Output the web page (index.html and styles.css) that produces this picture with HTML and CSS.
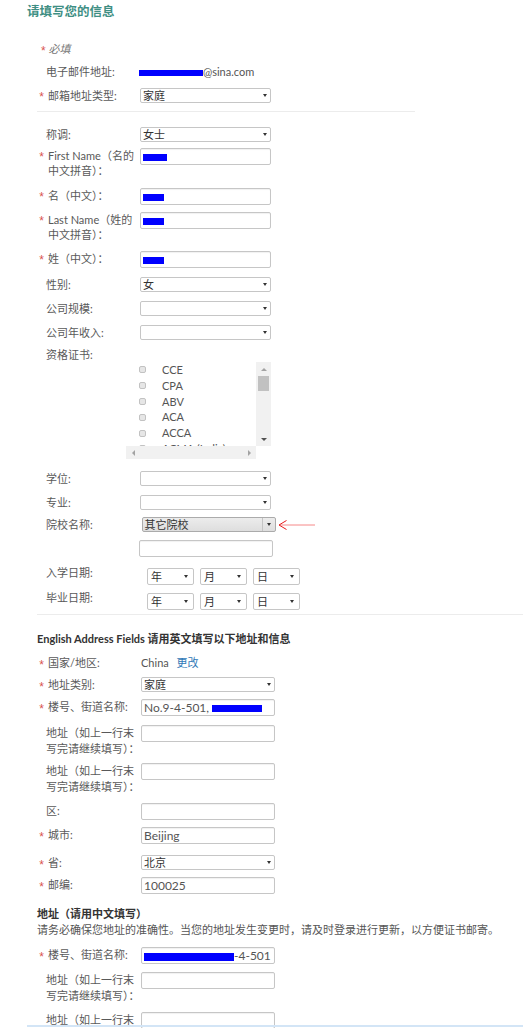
FILE: index.html
```html
<!DOCTYPE html>
<html lang="zh-CN">
<head>
<meta charset="utf-8">
<title>请填写您的信息</title>
<link rel="stylesheet" href="styles.css">
</head>
<body>
<div class="page">
  <h1 class="title">请填写您的信息</h1>
  <div class="note"><span class="star">*</span> <i>必填</i></div>

  <div class="sec s1">
    <div class="row h24"><span class="st"></span><label>电子邮件地址:</label><div class="val"><span class="redact r-email"></span>@sina.com</div></div>
    <div class="row h23"><span class="st">*</span><label class="req">邮箱地址类型:</label><div class="sel"><span>家庭</span><i class="caret"></i></div></div>
    <div class="rule short"></div>
    <div class="row h21"><span class="st"></span><label>称调:</label><div class="sel"><span>女士</span><i class="caret"></i></div></div>
    <div class="row h40"><span class="st">*</span><label class="req">First Name（名的<br>中文拼音）：</label><div class="inp"><span class="redact r24"></span></div></div>
    <div class="row h24"><span class="st">*</span><label class="req">名（中文）：</label><div class="inp"><span class="redact r21"></span></div></div>
    <div class="row h39"><span class="st">*</span><label class="req">Last Name（姓的<br>中文拼音）：</label><div class="inp"><span class="redact r21"></span></div></div>
    <div class="row h26"><span class="st">*</span><label class="req">姓（中文）：</label><div class="inp"><span class="redact r21"></span></div></div>
    <div class="row h24"><span class="st"></span><label>性别:</label><div class="sel"><span>女</span><i class="caret"></i></div></div>
    <div class="row h24"><span class="st"></span><label>公司规模:</label><div class="sel"><span></span><i class="caret"></i></div></div>
    <div class="row h22"><span class="st"></span><label>公司年收入:</label><div class="sel"><span></span><i class="caret"></i></div></div>
    <div class="row h15"><span class="st"></span><label>资格证书:</label></div>

    <div class="listbox">
      <div class="lb-items">
        <div class="lb-item"><span class="cb"></span>CCE</div>
        <div class="lb-item"><span class="cb"></span>CPA</div>
        <div class="lb-item"><span class="cb"></span>ABV</div>
        <div class="lb-item"><span class="cb"></span>ACA</div>
        <div class="lb-item"><span class="cb"></span>ACCA</div>
        <div class="lb-item"><span class="cb"></span>ACMA (India)</div>
      </div>
      <div class="vscroll"><span class="sb-btn"><i class="tri up"></i></span><span class="thumb"></span><span class="sb-fill"></span><span class="sb-btn"><i class="tri down"></i></span></div>
      <div class="hscroll"><span class="sb-btn"><i class="tri left"></i></span><span class="sb-fill"></span><span class="sb-btn"><i class="tri right"></i></span></div>
      <div class="corner"></div>
    </div>

    <div class="row h24"><span class="st"></span><label>学位:</label><div class="sel"><span></span><i class="caret"></i></div></div>
    <div class="row h22"><span class="st"></span><label>专业:</label><div class="sel"><span></span><i class="caret"></i></div></div>
    <div class="row h23"><span class="st"></span><label>院校名称:</label>
      <div class="school">
        <div class="sel gray"><span>其它院校</span><span class="btn"><i class="caret"></i></span></div>
        <svg class="pointer" width="38" height="12" viewBox="0 0 38 12"><line x1="1" y1="6" x2="37" y2="6" stroke="#f46a6a" stroke-width="0.8"/><polyline points="8.5,1.5 1,6 8.5,10.5" fill="none" stroke="#e81c1c" stroke-width="1"/></svg>
      </div>
    </div>
    <div class="row h28"><span class="st"></span><label></label><div class="inp wide"></div></div>
    <div class="row h25 date"><span class="st"></span><label>入学日期:</label><div class="dates"><div class="dsel"><span>年</span><i class="caret sm"></i></div><div class="dsel"><span>月</span><i class="caret sm"></i></div><div class="dsel"><span>日</span><i class="caret sm"></i></div></div></div>
    <div class="row h21 date"><span class="st"></span><label>毕业日期:</label><div class="dates"><div class="dsel"><span>年</span><i class="caret sm"></i></div><div class="dsel"><span>月</span><i class="caret sm"></i></div><div class="dsel"><span>日</span><i class="caret sm"></i></div></div></div>
    <div class="rule"></div>
  </div>

  <div class="sec s2">
    <h2 class="heading h25">English Address Fields 请用英文填写以下地址和信息</h2>
    <div class="row h22"><span class="st">*</span><label class="req">国家/地区:</label><div class="val">China <a class="link">更改</a></div></div>
    <div class="row h22"><span class="st">*</span><label class="req">地址类别:</label><div class="sel"><span>家庭</span><i class="caret"></i></div></div>
    <div class="row h26"><span class="st">*</span><label class="req">楼号、街道名称:</label><div class="inp">No.9-4-501, <span class="redact r50"></span></div></div>
    <div class="row h38"><span class="st"></span><label>地址（如上一行末<br>写完请继续填写）：</label><div class="inp"></div></div>
    <div class="row h40"><span class="st"></span><label>地址（如上一行末<br>写完请继续填写）：</label><div class="inp"></div></div>
    <div class="row h24"><span class="st"></span><label>区:</label><div class="inp"></div></div>
    <div class="row h28"><span class="st">*</span><label class="req">城市:</label><div class="inp">Beijing</div></div>
    <div class="row h22"><span class="st">*</span><label class="req">省:</label><div class="sel"><span>北京</span><i class="caret"></i></div></div>
    <div class="row h28"><span class="st">*</span><label class="req">邮编:</label><div class="inp">100025</div></div>
    <h3 class="subhead">地址（请用中文填写）</h3>
    <p class="desc">请务必确保您地址的准确性。当您的地址发生变更时，请及时登录进行更新，以方便证书邮寄。</p>
    <div class="row h25"><span class="st">*</span><label class="req">楼号、街道名称:</label><div class="inp"><span class="redact r90"></span>-4-501</div></div>
    <div class="row h40"><span class="st"></span><label>地址（如上一行末<br>写完请继续填写）：</label><div class="inp"></div></div>
    <div class="row h40"><span class="st"></span><label>地址（如上一行末<br>写完请继续填写）：</label><div class="inp"></div></div>
  </div>
</div>
<div class="focusline"></div>
</body>
</html>
```

FILE: styles.css
```css
* { box-sizing: border-box; }

body {
  margin: 0;
  background: #fff;
  font-family: Lato, "Noto Sans CJK SC", sans-serif;
  font-size: 11px;
  color: #595959;
}

.page { padding: 4px 0 0 27px; }

.title {
  margin: 0;
  font-size: 12.5px;
  line-height: 16px;
  font-weight: bold;
  color: #3f8f84;
}

.note {
  margin: 21px 0 8px 14px;
  height: 15px;
  line-height: 15px;
  color: #777;
}
.note i { font-style: italic; }
.star {
  color: #d9534f;
  font-family: "Liberation Sans", sans-serif;
  font-size: 12px;
  position: relative;
  top: 2px;
}

.sec { margin-left: 10px; }

.row {
  display: grid;
  grid-template-columns: 9px 94px auto;
  align-items: start;
}
.s2 .row { grid-template-columns: 9px 95px auto; }

.row label { line-height: 15px; white-space: nowrap; }
.s2 .row label { line-height: 16px; }
.row label.req { padding-left: 2px; }
.row.date label { line-height: 9px; }

.st {
  color: #d9534f;
  font-family: "Liberation Sans", sans-serif;
  font-size: 12px;
  line-height: 14px;
  padding-top: 2px;
  text-align: center;
}
.s2 .st { padding-top: 3px; }

.h15 { height: 15px; }
.h21 { height: 21px; }
.h22 { height: 22px; }
.h23 { height: 23px; }
.h24 { height: 24px; }
.h25 { height: 25px; }
.h26 { height: 26px; }
.h28 { height: 28px; }
.h38 { height: 38px; }
.h39 { height: 39px; }
.h40 { height: 40px; }

.val { line-height: 15px; color: #555; white-space: nowrap; }
.s2 .val { line-height: 16px; }
.link { color: #2f78b7; margin-left: 5px; }

.redact {
  display: inline-block;
  background: #0000ff;
  height: 7px;
  vertical-align: middle;
}
.r-email { width: 64px; height: 6px; margin-left: -1px; }
.r21 { width: 21px; }
.r24 { width: 24px; }
.r50 { width: 50px; }
.r90 { width: 90px; height: 8px; }

.inp {
  width: 131px;
  height: 17px;
  border: 1px solid #c6c6c6;
  border-radius: 2px;
  box-shadow: inset 0 1px 1px rgba(0,0,0,.06);
  padding: 0 2px;
  font-size: 12px;
  line-height: 15px;
  color: #555;
  white-space: nowrap;
  overflow: hidden;
}
.s2 .inp { width: 134px; }
.inp.wide { width: 134px; margin-left: -1px; }

.sel {
  display: flex;
  align-items: center;
  justify-content: space-between;
  width: 131px;
  height: 15px;
  border: 1px solid #c6c6c6;
  border-radius: 2px;
  padding-left: 2px;
  line-height: 13px;
  color: #333;
  white-space: nowrap;
}
.s2 .sel { width: 134px; }

.caret {
  display: block;
  width: 0;
  height: 0;
  margin-right: 3px;
  border-left: 2.5px solid transparent;
  border-right: 2.5px solid transparent;
  border-top: 3px solid #333;
}
.caret.sm {
  border-left-width: 2px;
  border-right-width: 2px;
  border-top-width: 3px;
  margin-right: 5px;
}

.school { display: flex; align-items: center; }
.sel.gray {
  width: 134px;
  margin-left: 1.5px;
  border-color: #ababab;
  background: linear-gradient(#ececec, #dedede);
  align-items: stretch;
}
.sel.gray span:first-child { line-height: 13px; }
.sel.gray .btn {
  display: flex;
  align-items: center;
  justify-content: center;
  width: 13px;
  border-left: 1px solid #c4c4c4;
}
.sel.gray .btn .caret { margin: 0; }
.pointer { margin-left: 2px; display: block; }

.dates { display: flex; gap: 6px; margin-left: 7px; }
.dsel {
  display: flex;
  align-items: center;
  justify-content: space-between;
  width: 47px;
  height: 17px;
  border: 1px solid #c6c6c6;
  border-radius: 2px;
  padding-left: 3px;
  line-height: 15px;
  color: #333;
}

.rule { height: 16px; border-top: 1px solid #ececec; }
.rule.short { width: 378px; }

/* listbox */
.listbox {
  display: grid;
  grid-template-columns: 130px 15px;
  grid-template-rows: 84px 13px;
  width: 145px;
  margin: 0 0 12px 89px;
}
.lb-items { overflow: hidden; padding-left: 13px; }
.lb-item {
  display: flex;
  align-items: center;
  height: 15.8px;
  line-height: 16px;
  color: #555;
  white-space: nowrap;
}
.cb {
  width: 7px;
  height: 7px;
  margin-right: 16px;
  border: 1px solid #c2c2c2;
  border-radius: 2px;
  background: #e6e6e6;
}
.vscroll {
  display: flex;
  flex-direction: column;
  background: #f1f1f1;
}
.hscroll {
  display: flex;
  background: #f1f1f1;
}
.corner { background: #fff; }
.sb-btn {
  display: flex;
  align-items: center;
  justify-content: center;
  flex: 0 0 14px;
}
.sb-fill { flex: 1; }
.thumb {
  flex: 0 0 15px;
  margin: 0 2px;
  background: #c1c1c1;
}
.tri { display: block; width: 0; height: 0; }
.tri.up { border-left: 3px solid transparent; border-right: 3px solid transparent; border-bottom: 3px solid #a3a3a3; }
.tri.down { border-left: 3px solid transparent; border-right: 3px solid transparent; border-top: 3px solid #505050; }
.tri.left { border-top: 3px solid transparent; border-bottom: 3px solid transparent; border-right: 3px solid #a3a3a3; }
.tri.right { border-top: 3px solid transparent; border-bottom: 3px solid transparent; border-left: 3px solid #a3a3a3; }

.heading {
  margin: 0;
  font-size: 11px;
  line-height: 17px;
  font-weight: bold;
  color: #333;
}
.subhead {
  margin: 0;
  height: 17px;
  font-size: 11px;
  line-height: 17px;
  font-weight: bold;
  color: #333;
}
.desc {
  margin: 0;
  height: 25px;
  line-height: 15px;
  color: #555;
  white-space: nowrap;
}

.focusline {
  position: fixed;
  left: 27px;
  right: 0;
  bottom: 1px;
  height: 2px;
  background: #d3e5f6;
}
```
